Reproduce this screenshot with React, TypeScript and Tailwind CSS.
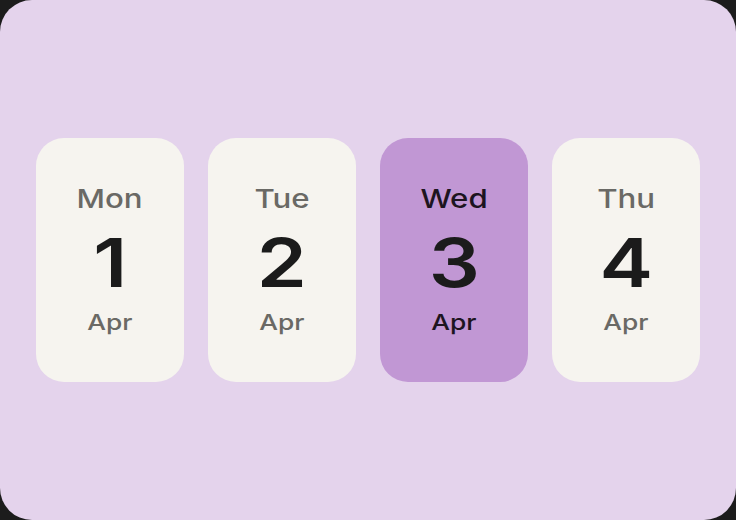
import React from "react";

const days = [
  { d: "Mon", n: "1", m: "Apr", active: false },
  { d: "Tue", n: "2", m: "Apr", active: false },
  { d: "Wed", n: "3", m: "Apr", active: true },
  { d: "Thu", n: "4", m: "Apr", active: false },
];

export default function App() {
  return (
    <div className="w-[736px] h-[520px] bg-[#1c1c1c]" style={{ fontFamily: "Inter, 'Liberation Sans', sans-serif" }}>
      <div className="w-full h-full rounded-[32px] bg-[#e4d3ec] flex items-center justify-center gap-6">
        {days.map((x) => (
          <div
            key={x.d}
            className={
              x.active
                ? "w-[148px] h-[244px] rounded-[28px] bg-[#c197d4] flex flex-col items-center"
                : "w-[148px] h-[244px] rounded-[28px] bg-[#f6f4ef] flex flex-col items-center"
            }
          >
            <div
              className={
                x.active
                  ? "pt-[45px] text-[26px] leading-[32px] font-medium text-[#1d1420]"
                  : "pt-[45px] text-[26px] leading-[32px] font-medium text-[#6a6965]"
              }
            >
              <span className="inline-block scale-x-[1.2]">{x.d}</span>
            </div>
            <div className="mt-[14px] text-[67px] leading-[67px] font-semibold text-[#1b1b1b]">
              <span className="inline-block scale-x-[1.2]">{x.n}</span>
            </div>
            <div
              className={
                x.active
                  ? "mt-[12px] text-[22px] leading-[28px] font-medium text-[#1d1420]"
                  : "mt-[12px] text-[22px] leading-[28px] font-medium text-[#6a6965]"
              }
            >
              <span className="inline-block scale-x-[1.2]">{x.m}</span>
            </div>
          </div>
        ))}
      </div>
    </div>
  );
}
